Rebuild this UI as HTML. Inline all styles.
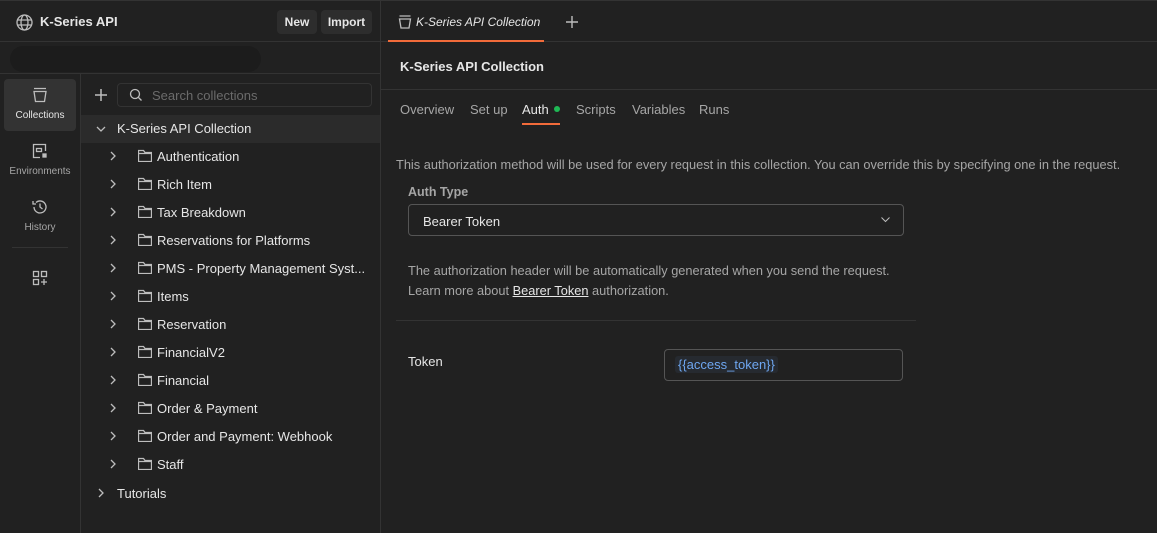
<!DOCTYPE html>
<html><head><style>
*{box-sizing:border-box;margin:0;padding:0}
body{width:1157px;height:533px;background:#212121;font-family:"Liberation Sans",sans-serif;color:#e6e6e6;position:relative;overflow:hidden;font-size:13px}
.a{position:absolute}
.g{color:#a6a6a6}
svg{position:absolute;fill:none;stroke:#bdbdbd;stroke-width:1.3}
</style></head><body>
<div class="a" style="left:0;top:0;width:1157px;height:1px;background:#333"></div>
<svg style="left:16px;top:14px" width="17" height="17" viewBox="0 0 17 17"><circle cx="8.5" cy="8.5" r="7.5"/><ellipse cx="8.5" cy="8.5" rx="3.5" ry="7.5"/><path d="M1 6h15M1 11h15"/></svg>
<div class="a" style="left:40px;top:14px;font-weight:bold;font-size:13px">K-Series API</div>
<div class="a" style="left:277px;top:10px;width:40px;height:24px;background:#2d2d2d;border-radius:4px;font-weight:bold;font-size:12px;text-align:center;line-height:24px">New</div>
<div class="a" style="left:321px;top:10px;width:51px;height:24px;background:#2d2d2d;border-radius:4px;font-weight:bold;font-size:12px;text-align:center;line-height:24px">Import</div>
<div class="a" style="left:0;top:41px;width:380px;height:1px;background:#333"></div>
<div class="a" style="left:10px;top:46px;width:251px;height:26px;background:#1c1c1c;border-radius:13px"></div>
<div class="a" style="left:0;top:73px;width:380px;height:1px;background:#333"></div>
<div class="a" style="left:380px;top:0;width:1px;height:533px;background:#333"></div>
<div class="a" style="left:80px;top:74px;width:1px;height:459px;background:#333"></div>
<div class="a" style="left:4px;top:79px;width:72px;height:52px;background:#333;border-radius:4px"></div>
<svg style="left:32px;top:87px" width="16" height="16" viewBox="0 0 16 16"><path d="M2 1.5h12M2 4.5h12l-1.5 10h-9z"/></svg>
<div class="a" style="left:4px;top:110px;width:72px;text-align:center;font-size:10px">Collections</div>
<svg style="left:32px;top:143px" width="16" height="16" viewBox="0 0 16 16"><path d="M13.5 8V1.5h-12v13H8"/><rect x="4.5" y="5.5" width="5" height="3"/><rect x="11" y="11" width="3" height="3" fill="#bdbdbd"/></svg>
<div class="a g" style="left:0;top:166px;width:80px;text-align:center;font-size:10px">Environments</div>
<svg style="left:31px;top:198px" width="18" height="18" viewBox="0 0 18 18"><path d="M3 9a6 6 0 1 0 2-4.5M2 3v3h3M9 5.5V9l2.5 2"/></svg>
<div class="a g" style="left:0;top:222px;width:80px;text-align:center;font-size:10px">History</div>
<div class="a" style="left:12px;top:247px;width:56px;height:1px;background:#333"></div>
<svg style="left:32px;top:270px" width="16" height="16" viewBox="0 0 16 16"><rect x="1.5" y="1.5" width="5" height="5"/><rect x="9.5" y="1.5" width="5" height="5"/><rect x="1.5" y="9.5" width="5" height="5"/><path d="M12 9v6M9 12h6"/></svg>
<svg style="left:94px;top:88px" width="14" height="14" viewBox="0 0 14 14"><path d="M7 1v12M1 7h12" stroke-width="1.5"/></svg>
<div class="a" style="left:117px;top:83px;width:255px;height:24px;border:1px solid #333;border-radius:4px"></div>
<svg style="left:129px;top:88px" width="14" height="14" viewBox="0 0 14 14"><circle cx="6" cy="6" r="4.5"/><path d="M9.5 9.5l3 3"/></svg>
<div class="a" style="left:152px;top:88px;color:#6b6b6b">Search collections</div>
<div class="a" style="left:81px;top:115px;width:299px;height:28px;background:#2b2b2b"></div>
<svg style="left:95px;top:123px" width="12" height="12" viewBox="0 0 12 12"><path d="M2 4l4 4 4-4"/></svg>
<div class="a" style="left:117px;top:121px">K-Series API Collection</div>
<div id="t"></div>
<script>
var n=["Authentication","Rich Item","Tax Breakdown","Reservations for Platforms","PMS - Property Management Syst...","Items","Reservation","FinancialV2","Financial","Order & Payment","Order and Payment: Webhook","Staff"];
var h="";n.forEach(function(s,i){var y=156+i*28;
h+='<svg style="left:107px;top:'+(y-6)+'px" width="12" height="12" viewBox="0 0 12 12"><path d="M4 2l4 4-4 4"/></svg>';
h+='<svg style="left:138px;top:'+(y-7)+'px" width="14" height="13" viewBox="0 0 14 13"><path d="M.5 1.5h5l1.5 2h6.5v9H.5zM.5 4.5h13"/></svg>';
h+='<div class="a" style="left:157px;top:'+(y-7)+'px">'+s.replace("&","&amp;")+'</div>';});
h+='<svg style="left:95px;top:487px" width="12" height="12" viewBox="0 0 12 12"><path d="M4 2l4 4-4 4"/></svg><div class="a" style="left:117px;top:486px">Tutorials</div>';
document.getElementById("t").innerHTML=h;
</script>
<svg style="left:398px;top:15px" width="14" height="14" viewBox="0 0 14 14"><path d="M1.5 1h11M1.5 4h11l-1.5 9h-8z"/></svg>
<div class="a" style="left:416px;top:15px;font-style:italic;font-size:12px">K-Series API Collection</div>
<svg style="left:565px;top:15px" width="14" height="14" viewBox="0 0 14 14"><path d="M7 1v12M1 7h12" stroke-width="1.4"/></svg>
<div class="a" style="left:381px;top:41px;width:776px;height:1px;background:#333"></div>
<div class="a" style="left:388px;top:40px;width:156px;height:2px;background:#f26b3a"></div>
<div class="a" style="left:400px;top:59px;font-weight:bold">K-Series API Collection</div>
<div class="a" style="left:381px;top:89px;width:776px;height:1px;background:#333"></div>
<div class="a g" style="left:400px;top:102px">Overview</div>
<div class="a g" style="left:470px;top:102px">Set up</div>
<div class="a" style="left:522px;top:102px">Auth</div>
<div class="a" style="left:554px;top:106px;width:6px;height:6px;border-radius:3px;background:#1fb955"></div>
<div class="a" style="left:522px;top:123px;width:38px;height:2px;background:#f26b3a"></div>
<div class="a g" style="left:576px;top:102px">Scripts</div>
<div class="a g" style="left:632px;top:102px">Variables</div>
<div class="a g" style="left:699px;top:102px">Runs</div>
<div class="a g" style="left:396px;top:157px;font-size:12.8px">This authorization method will be used for every request in this collection. You can override this by specifying one in the request.</div>
<div class="a g" style="left:408px;top:185px;font-weight:bold;font-size:12.5px">Auth Type</div>
<div class="a" style="left:408px;top:204px;width:496px;height:32px;border:1px solid #555;border-radius:4px"></div>
<div class="a" style="left:423px;top:214px">Bearer Token</div>
<svg style="left:880px;top:214px" width="11" height="11" viewBox="0 0 11 11"><path d="M1.5 3.5l4 4 4-4" stroke-width="1"/></svg>
<div class="a g" style="left:408px;top:263px;font-size:12.8px">The authorization header will be automatically generated when you send the request.</div>
<div class="a g" style="left:408px;top:283px;font-size:12.8px">Learn more about <span style="color:#e6e6e6;text-decoration:underline">Bearer Token</span> authorization.</div>
<div class="a" style="left:396px;top:320px;width:520px;height:1px;background:#333"></div>
<div class="a" style="left:408px;top:354px">Token</div>
<div class="a" style="left:664px;top:349px;width:239px;height:32px;border:1px solid #555;border-radius:4px"></div>
<div class="a" style="left:675px;top:356px;padding:1px 3px;background:#262a30;border-radius:3px;color:#6ea6f0;font-size:13px">{{access_token}}</div>
</body></html>
